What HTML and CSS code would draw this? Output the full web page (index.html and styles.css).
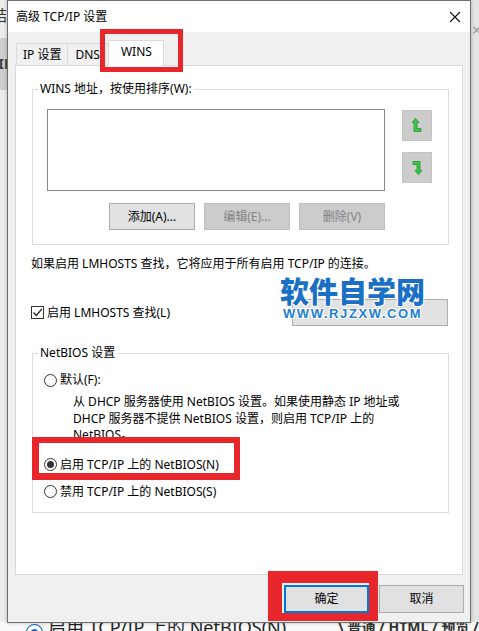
FILE: index.html
```html
<!DOCTYPE html>
<html lang="zh-CN">
<head>
    <meta charset="UTF-8">
    <meta name="viewport" content="width=device-width, initial-scale=1.0">
    <title>高级 TCP/IP 设置</title>
    <link rel="stylesheet" href="styles.css">
</head>
<body>
    <div id="screen">
        <!-- window behind the dialog -->
        <div id="behind">
            <span class="bg-char top">结</span>
            <div class="bg-band"><span class="bg-char">IF</span></div>
            <div class="bg-right"><span>×</span></div>
            <div class="bg-bottom">
                <span class="bg-radio"></span>
                <span class="bg-label">启用 TCP/IP 上的 NetBIOS(N)</span>
                <span class="bg-tabs">\ 普通 / HTML / 预览 /</span>
            </div>
        </div>

        <div id="dialog">
            <div class="titlebar">
                <span class="title">高级 TCP/IP 设置</span>
                <svg class="close" width="12" height="12" viewBox="0 0 12 12">
                    <path d="M1 1 L11 11 M11 1 L1 11" stroke="#111" stroke-width="1.1" fill="none"/>
                </svg>
            </div>
            <div class="dlg-body">
                <div class="tabs">
                    <div class="tab">IP 设置</div>
                    <div class="tab">DNS</div>
                    <div class="tab active">WINS</div>
                </div>
                <div class="panel">
                    <fieldset class="group">
                        <legend>WINS 地址，按使用排序(W):</legend>
                        <div class="group-inner wins">
                            <div class="list-row">
                                <div class="listbox"></div>
                                <div class="order-btns">
                                    <span class="order-btn">
                                        <svg width="10" height="15" viewBox="0 0 10 15">
                                            <path d="M3.5 0.5 L7 4.5 L5 4.5 L5 10.5 L9 10.5 L9 13.5 L2 13.5 L2 4.5 L0 4.5 Z" fill="#3cc84a" stroke="#1d8f2a" stroke-width="0.8"/>
                                        </svg>
                                    </span>
                                    <span class="order-btn">
                                        <svg width="10" height="15" viewBox="0 0 10 15">
                                            <path d="M6.5 14.5 L3 10.5 L5 10.5 L5 4.5 L1 4.5 L1 1.5 L8 1.5 L8 10.5 L10 10.5 Z" fill="#3cc84a" stroke="#1d8f2a" stroke-width="0.8"/>
                                        </svg>
                                    </span>
                                </div>
                            </div>
                            <div class="btn-row">
                                <button class="btn">添加(A)...</button>
                                <button class="btn disabled">编辑(E)...</button>
                                <button class="btn disabled">删除(V)</button>
                            </div>
                        </div>
                    </fieldset>

                    <p class="note">如果启用 LMHOSTS 查找，它将应用于所有启用 TCP/IP 的连接。</p>

                    <div class="lm-row">
                        <label class="check">
                            <span class="box">
                                <svg width="11" height="11" viewBox="0 0 11 11">
                                    <path d="M1.5 5.5 L4.3 8.5 L9.8 2" stroke="#222" stroke-width="1.2" fill="none"/>
                                </svg>
                            </span>
                            启用 LMHOSTS 查找(L)
                        </label>
                        <button class="btn import"></button>
                    </div>

                    <fieldset class="group netbios">
                        <legend>NetBIOS 设置</legend>
                        <div class="group-inner">
                            <div class="radio-row"><span class="radio"></span>默认(F):</div>
                            <p class="desc">从 DHCP 服务器使用 NetBIOS 设置。如果使用静态 IP 地址或<br>DHCP 服务器不提供 NetBIOS 设置，则启用 TCP/IP 上的<br>NetBIOS。</p>
                            <div class="radio-row enable"><span class="radio on"></span>启用 TCP/IP 上的 NetBIOS(N)</div>
                            <div class="radio-row disable"><span class="radio"></span>禁用 TCP/IP 上的 NetBIOS(S)</div>
                        </div>
                    </fieldset>
                </div>
                <div class="footer">
                    <button class="btn ok">确定</button>
                    <button class="btn">取消</button>
                </div>
            </div>
        </div>

        <!-- watermark and red annotation boxes drawn over the screenshot -->
        <div class="watermark">
            <div class="wm-big">软件自学网</div>
            <div class="wm-small">WWW.RJZXW.COM</div>
        </div>
        <div class="mark mark-tab"></div>
        <div class="mark mark-radio"></div>
        <div class="mark mark-ok"></div>
    </div>
</body>
</html>
```

FILE: styles.css
```css
* {
    box-sizing: border-box;
}
body {
    margin: 0;
    font-family: "Noto Sans", "Noto Sans CJK SC", sans-serif;
    font-size: 12px;
    line-height: 16px;
    color: #000;
    background: #f2f2f2;
}
#screen {
    position: relative;
    width: 479px;
    height: 631px;
    overflow: hidden;
}

/* background window */
#behind {
    position: absolute;
    inset: 0;
    background: #ededed;
}
.bg-char {
    position: absolute;
    left: -8px;
    font-size: 15px;
    color: #333;
}
.bg-char.top {
    top: 7px;
}
.bg-band {
    position: absolute;
    left: 0;
    top: 38px;
    width: 10px;
    height: 52px;
    background: #cfcfcf;
}
.bg-band .bg-char {
    left: -2px;
    top: 17px;
    font-weight: bold;
    color: #444;
}
.bg-right {
    position: absolute;
    right: 0;
    top: 0;
    width: 10px;
    height: 631px;
    background: #e4e4e4;
    border-left: 1px solid #bdbdbd;
}
.bg-right span {
    position: absolute;
    left: 2px;
    top: 22px;
    font-size: 16px;
    color: #999;
}
.bg-bottom {
    position: absolute;
    left: 0;
    top: 622px;
    width: 479px;
    height: 20px;
    background: #fafafa;
}
.bg-radio {
    position: absolute;
    left: 27px;
    top: 3px;
    width: 15px;
    height: 15px;
    border-radius: 50%;
    border: 4px solid #fff;
    box-shadow: 0 0 0 1px #1c64c8;
    background: #1c64c8;
}
.bg-label {
    position: absolute;
    left: 48px;
    top: -3px;
    font-size: 18px;
    color: #222;
}
.bg-tabs {
    position: absolute;
    left: 338px;
    top: -3px;
    font-size: 14px;
    font-weight: bold;
    color: #333;
    white-space: nowrap;
}

/* dialog window */
#dialog {
    position: absolute;
    left: 7px;
    top: 0;
    width: 464px;
    height: 623px;
    border: 1px solid #6e6e6e;
    background: #f0f0f0;
    box-shadow: 0 0 4px rgba(0, 0, 0, 0.25);
    display: flex;
    flex-direction: column;
}
.titlebar {
    height: 31px;
    background: #fff;
    display: flex;
    align-items: center;
    padding: 0 9px 0 8px;
}
.title {
    flex: 1;
}
.close {
    display: block;
}
.dlg-body {
    flex: 1;
    display: flex;
    flex-direction: column;
}
.tabs {
    display: flex;
    align-items: flex-end;
    height: 33px;
    padding-left: 8px;
}
.tab {
    height: 22px;
    padding: 0 6px;
    border: 1px solid #d9d9d9;
    border-bottom: none;
    margin-right: -1px;
    display: flex;
    align-items: center;
    white-space: nowrap;
    background: #f0f0f0;
}
.tab:nth-child(2) {
    padding: 0 9px 0 7px;
}
.tab.active {
    position: relative;
    z-index: 1;
    height: 26px;
    margin-bottom: -1px;
    margin-left: -1px;
    padding: 0 11px 3px 12px;
    background: #fff;
}
.panel {
    margin-left: 7px;
    width: 448px;
    height: 510px;
    border: 1px solid #d9d9d9;
    background: #fff;
    padding: 0 13px 0 16px;
}

/* group boxes */
.group {
    margin: 0;
    padding: 0;
    border: 1px solid #dcdcdc;
    min-width: 0;
}
.group legend {
    margin-left: 5px;
    padding: 0 2px;
    line-height: 16px;
}
.group-inner.wins {
    padding: 12px 0 14px 14px;
}
.panel > .group:first-child {
    margin-top: 15px;
}
.list-row {
    display: flex;
    align-items: flex-start;
}
.listbox {
    width: 338px;
    height: 82px;
    border: 1px solid #828790;
    background: #fff;
}
.order-btns {
    display: flex;
    flex-direction: column;
    gap: 11px;
    margin: 1px 0 0 17px;
}
.order-btn {
    width: 30px;
    height: 31px;
    background: #cccccc;
    border: 1px solid #c4c4c4;
    display: flex;
    align-items: center;
    justify-content: center;
}
.btn-row {
    display: flex;
    gap: 9px;
    margin-top: 12px;
    padding-left: 62px;
}
.btn {
    font: inherit;
    height: 27px;
    width: 86px;
    padding: 0;
    background: #e1e1e1;
    border: 1px solid #adadad;
    color: #000;
}
.btn.disabled {
    background: #cccccc;
    border-color: #bfbfbf;
    color: #838383;
}
.note {
    margin: 11px 0 0 -1px;
}
.lm-row {
    display: flex;
    align-items: center;
    margin-top: 27px;
}
.check {
    display: flex;
    align-items: center;
    gap: 3px;
    flex: 1;
    margin-left: -1px;
}
.box {
    width: 13px;
    height: 13px;
    border: 1px solid #333;
    display: flex;
    align-items: center;
    justify-content: center;
    background: #fff;
}
.btn.import {
    width: 156px;
    margin-right: 1px;
}
.group.netbios {
    margin-top: 19px;
}
.netbios .group-inner {
    padding: 11px 0 12px 11px;
}
.radio-row {
    display: flex;
    align-items: center;
    gap: 3px;
}
.radio {
    width: 13px;
    height: 13px;
    border: 1px solid #333;
    border-radius: 50%;
    background: #fff;
    display: grid;
    place-items: center;
}
.radio.on::after {
    content: "";
    width: 7px;
    height: 7px;
    border-radius: 50%;
    background: #333;
}
.desc {
    margin: 6px 0 0 29px;
    line-height: 16.5px;
}
.radio-row.enable {
    margin-top: 13px;
}
.radio-row.disable {
    margin-top: 11px;
}
.footer {
    display: flex;
    justify-content: flex-end;
    gap: 10px;
    padding: 10px 6px 0 0;
}
.footer .btn {
    width: 85px;
    height: 28px;
}
.btn.ok {
    border: 2px solid #0078d7;
}

/* overlays */
.watermark {
    position: absolute;
    left: 280px;
    top: 275px;
    z-index: 5;
}
.wm-big {
    font-family: "Noto Sans CJK SC", sans-serif;
    font-weight: 900;
    font-size: 29px;
    line-height: 31px;
    color: #1a70c4;
    text-shadow: 1px 1px 0 #fff, -1px -1px 0 #fff, 1px -1px 0 #fff, -1px 1px 0 #fff;
}
.wm-small {
    font-family: "Liberation Sans", sans-serif;
    font-weight: bold;
    font-size: 13px;
    line-height: 13px;
    letter-spacing: 1.6px;
    margin: 1px 0 0 3px;
    color: #1f7fd0;
    text-shadow: 1px 1px 0 #fff, -1px -1px 0 #fff, 1px -1px 0 #fff, -1px 1px 0 #fff;
}
.mark {
    position: absolute;
    z-index: 6;
    border: 5px solid #e8272c;
}
.mark-tab {
    left: 100px;
    top: 29px;
    width: 83px;
    height: 43px;
}
.mark-radio {
    left: 32px;
    top: 437px;
    width: 208px;
    height: 43px;
    border-width: 6px 6px 7px 7px;
}
.mark-ok {
    left: 268px;
    top: 571px;
    width: 110px;
    height: 50px;
    border-width: 12px 9px 8px 14px;
}
```
